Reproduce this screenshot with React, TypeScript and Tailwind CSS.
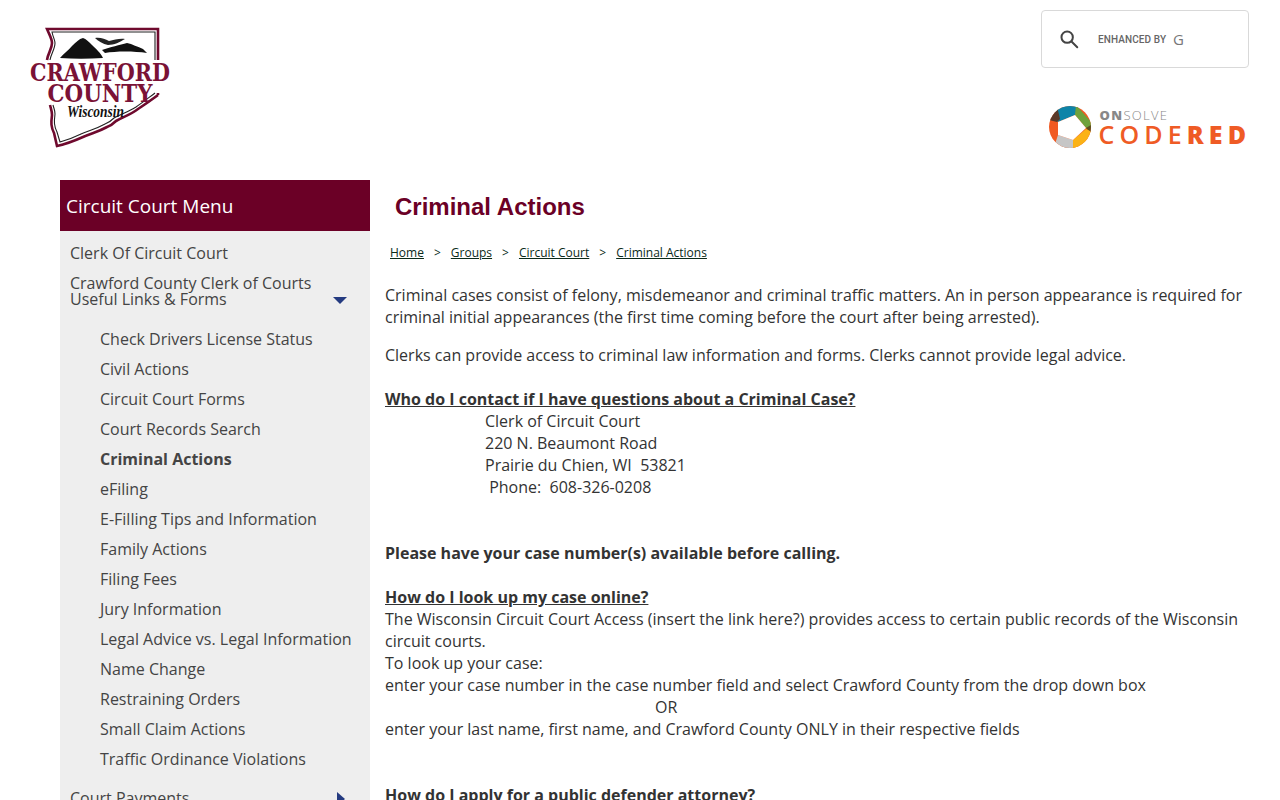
const subs = ["Check Drivers License Status","Civil Actions","Circuit Court Forms","Court Records Search","Criminal Actions","eFiling","E-Filling Tips and Information","Family Actions","Filing Fees","Jury Information","Legal Advice vs. Legal Information","Name Change","Restraining Orders","Small Claim Actions","Traffic Ordinance Violations"];

function Logo() {
  const outer = "M132 35 V4 H21 C24 11 26 14 26 18 C26 24 22 28 21 35 M132 70 C124 76 118 80 112 84 C104 90 97 92 90 96 C86 100 84 101 81 102 C72 107 66 108 57 112 C48 116 40 119 31 121 L28 108 C25 102 25 98 26 90 C26 86 25 84 24 80 M132 68 V70";
  const inner = "M129 35 V7 H26 C27 12 29 15 29 18 C29 24 25 29 24 35 M129 68 C121 74 116 78 110 82 C102 87 95 89 88 93 C84 97 82 98 79 99 C70 104 64 105 55 109 C47 113 41 115 34 117 L31 107 C28 101 28 97 29 89 C29 85 28 84 27 80";
  return (
    <svg width="146" height="125" viewBox="0 0 146 125" className="block">
      <path d={outer} fill="none" stroke="#6f0a2e" strokeWidth="2.6" />
      <path d={inner} fill="none" stroke="#222" strokeWidth="1.1" />
      <path d="M34 33 C38 28 42 26 46 21 C50 17 53 14 57 13 C60 14 63 17 66 20 C70 24 75 28 77 33 C62 34 48 34 34 33 Z" fill="#111" />
      <path d="M76 25 C84 22 94 20 101 18 C106 19 112 22 117 24 L121 28 C108 26 90 26 79 28 Z" fill="#111" />
      <path d="M69 13 C74 12 79 14 83 16 C88 15 94 13 99 14 C94 17 88 20 82 20 C77 19 72 16 69 13 Z" fill="#222" />
      <text x="74" y="56" textAnchor="middle" fontFamily="'DejaVu Serif', serif" fontWeight="700" fontSize="24" textLength="140" lengthAdjust="spacingAndGlyphs" fill="#7a1236">CRAWFORD</text>
      <text x="74" y="77" textAnchor="middle" fontFamily="'DejaVu Serif', serif" fontWeight="700" fontSize="24" textLength="105" lengthAdjust="spacingAndGlyphs" fill="#7a1236">COUNTY</text>
      <text x="69.5" y="92" textAnchor="middle" fontFamily="'Liberation Serif', serif" fontStyle="italic" fontWeight="700" fontSize="16" textLength="57" lengthAdjust="spacingAndGlyphs" fill="#111">Wisconsin</text>
    </svg>
  );
}

function CodeRed() {
  return (
    <div className="flex items-start gap-[8px] font-['Open_Sans',sans-serif]">
      <svg width="42" height="42" viewBox="0 0 42 42" className="block">
        <clipPath id="cr"><circle cx="21" cy="21" r="21" /></clipPath>
        <g clipPath="url(#cr)">
          <rect width="42" height="42" fill="#f05a22" />
          <path d="M6 -2 H30 L26 9 L9 16 L7 14 Z" fill="#0d84a8" />
          <path d="M0 14 L8 0 L11 13 L8 16 Z" fill="#5a3a2a" />
          <path d="M27 -1 L45 19 L37 22 L26 9 Z" fill="#6fa23c" />
          <path d="M37 22 L45 17 L45 30 Z" fill="#5c4f1f" />
          <path d="M37 23 L45 27 L30 46 L22 46 L24 34 Z" fill="#fbb216" />
          <path d="M24 34 L24 46 L4 44 L9 29 Z" fill="#c6c6c6" />
          <path d="M9 16 L26 9 L37 22 L24 34 L9 29 Z" fill="#fff" />
        </g>
      </svg>
      <div className="flex flex-col pt-[3px]">
        <span className="ml-[1px] text-[13px] leading-[13px] tracking-[1.3px] text-[#888] font-light"><b className="font-extrabold">ON</b>SOLVE</span>
        <span className="text-[25px] leading-[25px] tracking-[5.1px] mr-[-5.1px] text-[#ef5b25] font-semibold whitespace-nowrap">CODE<b className="font-extrabold">RED</b></span>
      </div>
    </div>
  );
}

export default function App() {
  return (
    <div className="h-[800px] overflow-hidden bg-white font-['Open_Sans',sans-serif] text-[16px] leading-[22px] text-[#333]">
      <header className="h-[180px] flex justify-between pl-[26px] pr-[31px]">
        <div className="pt-[25px]"><Logo /></div>
        <div className="flex flex-col items-end pt-[10px]">
          <div className="w-[208px] h-[58px] border border-[#d9d9d9] rounded-[4px] flex items-center pl-[16px] font-['Roboto',sans-serif]">
            <svg width="22" height="22" viewBox="0 0 24 24" fill="none" stroke="#444" strokeWidth="2.2" strokeLinecap="round"><circle cx="10" cy="10" r="6.2"/><path d="M15 15l6 6"/></svg>
            <span className="ml-[18px] mt-[2px] text-[10px] font-medium text-[#666] tracking-[0.1px]">ENHANCED BY</span>
            <span className="ml-[7px] text-[15px] font-['Open_Sans',sans-serif] font-medium text-[#777]">G</span>
          </div>
          <div className="mt-[38px] mr-[3px]"><CodeRed /></div>
        </div>
      </header>
      <div className="flex">
        <aside className="w-[310px] ml-[60px] shrink-0 bg-[#eeeeee]">
          <h2 className="h-[51px] bg-[#6b0026] text-white text-[19px] leading-[53px] pl-[6px]">Circuit Court Menu</h2>
          <ul className="pt-[7px] text-[#444]">
            <li className="pl-[10px] h-[30px] leading-[30px]">Clerk Of Circuit Court</li>
            <li className="pl-[10px] pt-[7px] pb-[17px] leading-[16px] relative">
              Crawford County Clerk of Courts<br />Useful Links &amp; Forms
              <span className="absolute right-[23px] top-[29px] w-0 h-0 border-x-[7px] border-x-transparent border-t-[7px] border-t-[#243a80]" />
            </li>
            {subs.map((s) => (
              <li key={s} className={`pl-[40px] h-[30px] leading-[30px] ${s === "Criminal Actions" ? "font-bold" : ""}`}>{s}</li>
            ))}
            <li className="pl-[10px] h-[30px] leading-[30px] mt-[9px] relative">
              Court Payments
              <span className="absolute right-[25px] top-[9px] w-0 h-0 border-y-[7px] border-y-transparent border-l-[8px] border-l-[#243a80]" />
            </li>
          </ul>
        </aside>
        <main className="ml-[15px] flex-1 pr-[30px]">
          <h1 className="font-['Liberation_Sans',sans-serif] font-bold text-[24px] leading-[28px] text-[#6b0026] pl-[10px] pt-[13px]">Criminal Actions</h1>
          <nav className="pl-[5px] mt-[21px] text-[12px] leading-[22px] text-[#0a2a1a] flex">
            <a className="underline">Home</a><span className="mx-[10px]">&gt;</span>
            <a className="underline">Groups</a><span className="mx-[10px]">&gt;</span>
            <a className="underline">Circuit Court</a><span className="mx-[10px]">&gt;</span>
            <a className="underline">Criminal Actions</a>
          </nav>
          <p className="mt-[20px]">Criminal cases consist of felony, misdemeanor and criminal traffic matters. An in person appearance is required for criminal initial appearances (the first time coming before the court after being arrested).</p>
          <p className="mt-[16px]">Clerks can provide access to criminal law information and forms. Clerks cannot provide legal advice.</p>
          <p className="mt-[22px] font-bold underline">Who do I contact if I have questions about a Criminal Case?</p>
          <div className="pl-[100px]">
            <p>Clerk of Circuit Court</p>
            <p>220 N. Beaumont Road</p>
            <p>Prairie du Chien, WI&nbsp; 53821</p>
            <p>&nbsp;Phone:&nbsp; 608-326-0208</p>
          </div>
          <p className="mt-[44px] font-bold">Please have your case number(s) available before calling.</p>
          <p className="mt-[22px] font-bold underline">How do I look up my case online?</p>
          <p>The Wisconsin Circuit Court Access (insert the link here?) provides access to certain public records of the Wisconsin circuit courts.</p>
          <p>To look up your case:</p>
          <p>enter your case number in the case number field and select Crawford County from the drop down box</p>
          <p className="pl-[270px]">OR</p>
          <p>enter your last name, first name, and Crawford County ONLY in their respective fields</p>
          <p className="mt-[44px] font-bold underline">How do I apply for a public defender attorney?</p>
        </main>
      </div>
    </div>
  );
}
